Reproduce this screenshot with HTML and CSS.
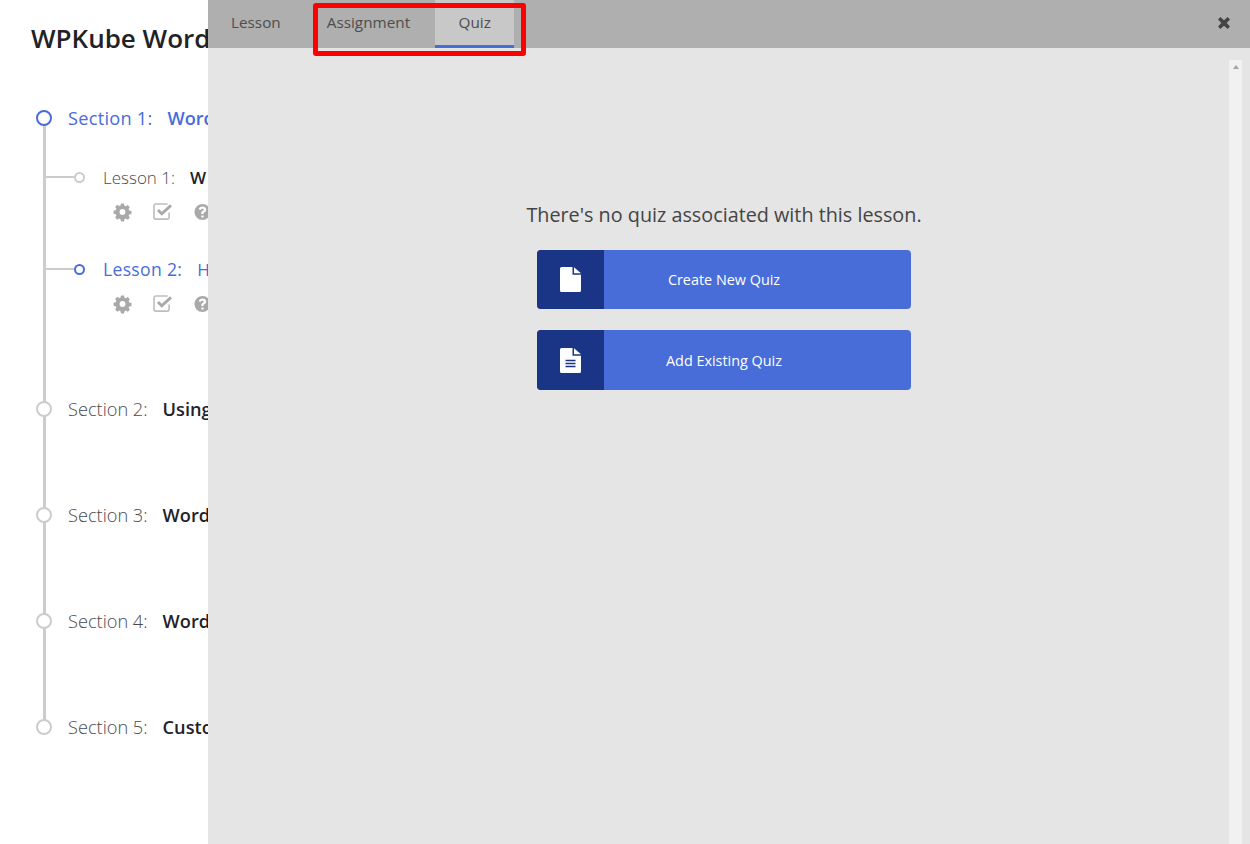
FILE: index.html
```html
<!DOCTYPE html>
<html lang="en">
<head>
<meta charset="utf-8">
<title>Course Builder</title>
<link rel="stylesheet" href="styles.css">
</head>
<body>
<main class="course">
  <h1 class="course-title">WPKube Word</h1>
  <div class="timeline">
    <section class="section is-active">
      <div class="section-row"><span class="dot"></span><span class="label">Section 1:</span><strong class="name">Word</strong></div>
      <div class="lesson">
        <div class="lesson-row"><span class="branch"></span><span class="dot-small"></span><span class="label">Lesson 1:</span><strong class="name">W</strong></div>
        <div class="lesson-tools">
          <svg class="tool" viewBox="0 0 18 18"><path fill-rule="evenodd" d="M7.400 0h3.200l.5 2.400 1.500.6 2-1.300 2.200 2.200-1.300 2 .6 1.500 2.400.5v3.200l-2.400.5-.6 1.500 1.300 2-2.200 2.200-2-1.300-1.500.6-.5 2.400H7.400l-.5-2.400-1.500-.6-2 1.300L1.200 14.800l1.300-2-.6-1.500L-.5 10.800V7.600l2.400-.5.6-1.500-1.300-2L3.400 1.400l2 1.300 1.500-.6zM9 5.900a3.100 3.100 0 1 0 0 6.200 3.100 3.100 0 0 0 0-6.200z"/></svg>
          <svg class="tool" viewBox="0 0 18 18"><path class="tool-line" d="M16 9.500V14.500a2 2 0 0 1-2 2H2a2 2 0 0 1-2-2V2.500a2 2 0 0 1 2-2h12.500"/><path class="tool-tick" d="M4.200 6.800l4 4L18 2"/></svg>
          <svg class="tool" viewBox="0 0 18 18"><path fill-rule="evenodd" d="M9 .5a8.500 8.500 0 1 1 0 17 8.500 8.500 0 0 1 0-17zM7.800 12.700v2.200h2.400v-2.200zM9 3.300c-2 0-3.500 1-4 2.800l1.900.9c.4-1 1-1.500 2-1.500.8 0 1.400.4 1.400 1 0 .5-.4.900-1.100 1.300-1 .6-1.500 1.300-1.500 2.400v.9h2.400v-.6c0-.5.3-.8 1-1.200 1.100-.7 1.800-1.500 1.800-2.900 0-1.800-1.700-3.100-3.900-3.100z"/></svg>
        </div>
      </div>
      <div class="lesson is-current">
        <div class="lesson-row"><span class="branch"></span><span class="dot-small"></span><span class="label">Lesson 2:</span><strong class="name">H</strong></div>
        <div class="lesson-tools">
          <svg class="tool" viewBox="0 0 18 18"><path fill-rule="evenodd" d="M7.400 0h3.200l.5 2.400 1.500.6 2-1.300 2.200 2.200-1.300 2 .6 1.500 2.400.5v3.200l-2.400.5-.6 1.500 1.300 2-2.200 2.200-2-1.300-1.500.6-.5 2.400H7.400l-.5-2.400-1.500-.6-2 1.300L1.200 14.800l1.300-2-.6-1.500L-.5 10.800V7.600l2.400-.5.6-1.500-1.300-2L3.400 1.400l2 1.300 1.500-.6zM9 5.900a3.100 3.100 0 1 0 0 6.200 3.100 3.100 0 0 0 0-6.200z"/></svg>
          <svg class="tool" viewBox="0 0 18 18"><path class="tool-line" d="M16 9.500V14.500a2 2 0 0 1-2 2H2a2 2 0 0 1-2-2V2.500a2 2 0 0 1 2-2h12.500"/><path class="tool-tick" d="M4.200 6.800l4 4L18 2"/></svg>
          <svg class="tool" viewBox="0 0 18 18"><path fill-rule="evenodd" d="M9 .5a8.500 8.500 0 1 1 0 17 8.500 8.500 0 0 1 0-17zM7.800 12.700v2.200h2.400v-2.200zM9 3.300c-2 0-3.500 1-4 2.800l1.900.9c.4-1 1-1.500 2-1.500.8 0 1.400.4 1.400 1 0 .5-.4.900-1.100 1.300-1 .6-1.500 1.300-1.500 2.400v.9h2.400v-.6c0-.5.3-.8 1-1.200 1.100-.7 1.800-1.500 1.800-2.900 0-1.800-1.700-3.100-3.900-3.100z"/></svg>
        </div>
      </div>
    </section>
    <section class="section">
      <div class="section-row"><span class="dot"></span><span class="label">Section 2:</span><strong class="name">Using</strong></div>
    </section>
    <section class="section">
      <div class="section-row"><span class="dot"></span><span class="label">Section 3:</span><strong class="name">Word</strong></div>
    </section>
    <section class="section">
      <div class="section-row"><span class="dot"></span><span class="label">Section 4:</span><strong class="name">Word</strong></div>
    </section>
    <section class="section">
      <div class="section-row"><span class="dot"></span><span class="label">Section 5:</span><strong class="name">Custo</strong></div>
    </section>
  </div>
</main>

<aside class="panel">
  <header class="panel-head">
    <nav class="tabs">
      <a class="tab">Lesson</a>
      <a class="tab">Assignment</a>
      <a class="tab is-selected">Quiz</a>
    </nav>
    <svg class="close" viewBox="0 0 12 12"><path d="M2.400 0L6 3.300 9.600 0 12 2.400 8.700 6 12 9.600 9.600 12 6 8.700 2.400 12 0 9.600 3.300 6 0 2.400z"/></svg>
  </header>
  <div class="panel-body">
    <div class="quiz-empty">
      <p class="message">There's no quiz associated with this lesson.</p>
      <a class="action">
        <span class="action-icon">
          <svg class="doc" viewBox="0 0 21 25"><path d="M1.500 0H12.500V7.700H21V23.500a1.500 1.500 0 0 1-1.500 1.500H1.500A1.500 1.500 0 0 1 0 23.500V1.500A1.500 1.500 0 0 1 1.500 0z"/><path d="M14 .3L21 6.300H14z"/></svg>
        </span>
        <span class="action-text">Create New Quiz</span>
      </a>
      <a class="action action-second">
        <span class="action-icon">
          <svg class="doc" viewBox="0 0 21 25"><path d="M1.500 0H12.500V7.700H21V23.500a1.500 1.500 0 0 1-1.500 1.500H1.500A1.500 1.500 0 0 1 0 23.500V1.500A1.500 1.500 0 0 1 1.500 0z"/><path d="M14 .3L21 6.300H14z"/><path class="doc-lines" d="M5.500 12.500H15.500M5.500 15.500H15.500M5.500 18.500H15.500"/></svg>
        </span>
        <span class="action-text">Add Existing Quiz</span>
      </a>
    </div>
    <div class="scrollbar"><span class="scroll-arrow"></span></div>
  </div>
</aside>
<div class="highlight"></div>
</body>
</html>
```

FILE: styles.css
```css
* { box-sizing: border-box; }

html, body {
  margin: 0;
  height: 100%;
  overflow: hidden;
}

body {
  position: relative;
  background: #fff;
  color: #1f2328;
  font-family: "Open Sans", "Noto Sans", sans-serif;
}

/* Course outline: the slide-over panel covers everything right of 208px */
.course {
  width: 208px;
  height: 100%;
  overflow: hidden;
  padding: 19px 0 0 31px;
}

.course-title {
  margin: 0;
  font-size: 26px;
  line-height: 38px;
  font-weight: 600;
  white-space: nowrap;
}

.timeline {
  position: relative;
  margin: 48px 0 0 5px;
}

.timeline::before {
  content: "";
  position: absolute;
  left: 7px;
  top: 10px;
  bottom: 10px;
  width: 3px;
  background: #ccc;
}

.section {
  position: relative;
  padding-bottom: 80px;
}

.section:last-child { padding-bottom: 0; }

.section-row {
  display: flex;
  align-items: center;
  height: 26px;
  font-size: 18.200px;
  white-space: nowrap;
}

.dot {
  position: relative;
  flex: none;
  width: 16px;
  height: 16px;
  margin-right: 16px;
  border: 2.500px solid #ccc;
  border-radius: 50%;
  background: #fff;
}

.label {
  font-weight: 300;
  color: #4a4a4a;
  margin-right: 15px;
}

.name { font-weight: 600; }

.is-active > .section-row .dot { border-color: #486dd9; }
.is-active > .section-row .label,
.is-active > .section-row .name { color: #486dd9; }
.is-active > .section-row .label { font-weight: 400; letter-spacing: 0.250px; }

.lesson { position: relative; margin-top: 33px; padding-left: 9px; }
.lesson + .lesson { margin-top: 35px; margin-bottom: 3px; }

.lesson-row {
  display: flex;
  align-items: center;
  height: 26px;
  font-size: 17px;
  white-space: nowrap;
}

.branch {
  flex: none;
  width: 29px;
  height: 2px;
  background: #ccc;
}

.dot-small {
  flex: none;
  width: 11px;
  height: 11px;
  margin-right: 18px;
  border: 2px solid #ccc;
  border-radius: 50%;
  background: #fff;
}

.lesson-row .label { margin-right: 15px; }

.is-current .dot-small { border-color: #486dd9; }
.is-current .label,
.is-current .name { color: #486dd9; font-weight: 400; }
.is-current .label { font-size: 17.600px; letter-spacing: 0.300px; }

.lesson-tools {
  display: flex;
  gap: 23px;
  margin: 13px 0 0 69px;
}

.tool {
  flex: none;
  width: 17px;
  height: 18px;
  fill: #a9a9a9;
  overflow: visible;
}

.tool-line {
  fill: none;
  stroke: #bdbdbd;
  stroke-width: 1.700;
}

.tool-tick {
  fill: none;
  stroke: #a9a9a9;
  stroke-width: 3;
}

/* Slide-over panel */
.panel {
  position: absolute;
  top: 0;
  right: 0;
  bottom: 0;
  left: 208px;
  display: flex;
  flex-direction: column;
  background: #e5e5e5;
}

.panel-head {
  flex: none;
  display: flex;
  justify-content: space-between;
  align-items: center;
  height: 48px;
  padding: 0 20px 2px 0;
  background: #afafaf;
}

.tabs {
  display: flex;
  align-self: flex-start;
  height: 48px;
}

.tab {
  display: flex;
  align-items: center;
  justify-content: center;
  height: 100%;
  padding: 0 23px 1px;
  border-bottom: 3px solid transparent;
  font-size: 15.300px;
  color: #4d4d4d;
}

.tab.is-selected {
  min-width: 79px;
  margin-left: 2px;
  background: #c8c8c8;
  border-bottom-color: #486dd9;
}

.close {
  width: 12px;
  height: 12px;
  fill: #444;
}

.panel-body {
  position: relative;
  flex: 1;
  display: flex;
  padding-right: 10px;
}

.quiz-empty {
  flex: 1;
  display: flex;
  flex-direction: column;
  align-items: center;
  padding-top: 152px;
}

.message {
  margin: 0 0 20px;
  font-size: 19.800px;
  line-height: 30px;
  color: #444;
}

.action {
  position: relative;
  display: flex;
  width: 374px;
  height: 59px;
  border-radius: 4px;
  background: #486dd9;
  overflow: hidden;
}

.action-second {
  height: 60px;
  margin-top: 21px;
}

.action-icon {
  flex: none;
  display: flex;
  align-items: center;
  justify-content: center;
  width: 67px;
  background: #1a3586;
}

.doc {
  width: 21px;
  height: 25px;
  fill: #fff;
}

.doc-lines {
  fill: none;
  stroke: #1a3586;
  stroke-width: 1.500;
}

.action-text {
  position: absolute;
  inset: 0;
  display: flex;
  align-items: center;
  justify-content: center;
  font-size: 14.400px;
  color: #fff;
}

.scrollbar {
  position: absolute;
  top: 12px;
  right: 8px;
  bottom: 0;
  width: 13px;
  padding-top: 5px;
  background: #f1f1f1;
  display: flex;
  justify-content: center;
  align-items: flex-start;
}

.scroll-arrow {
  width: 0;
  height: 0;
  border: 3px solid transparent;
  border-top: 0;
  border-bottom: 4px solid #a3a3a3;
}

/* Annotation drawn on top of the screenshot */
.highlight {
  position: absolute;
  left: 313px;
  top: 3px;
  width: 213px;
  height: 53px;
  border: 5px solid #f00;
  border-radius: 3px;
}
```
